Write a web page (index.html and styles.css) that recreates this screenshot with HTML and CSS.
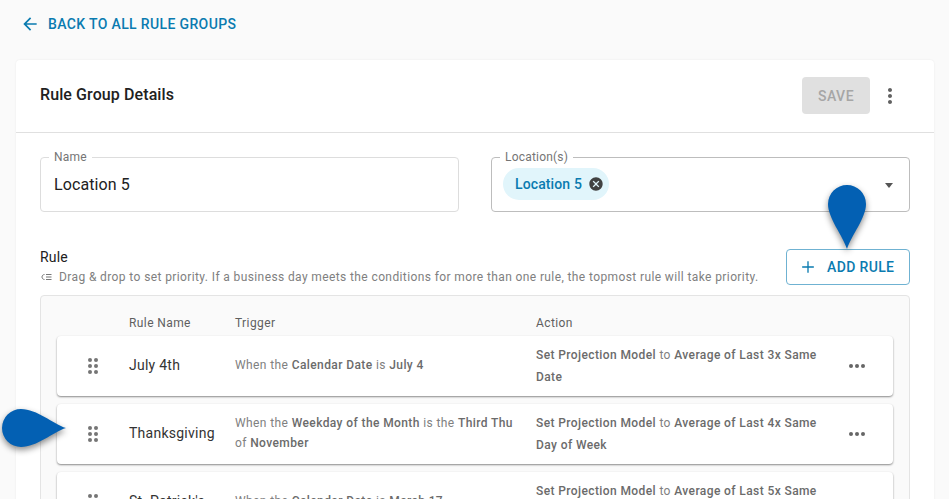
FILE: index.html
```html
<!DOCTYPE html>
<html lang="en">
<head>
<meta charset="utf-8">
<title>Rule Group Details</title>
<link rel="stylesheet" href="styles.css">
</head>
<body>
<div class="page">
  <a class="back">
    <svg class="back-icon" viewBox="0 0 24 24" width="20" height="20"><path d="M20 11H7.830l5.590-5.590L12 4l-8 8 8 8 1.410-1.410L7.830 13H20v-2z"/></svg>
    <span>BACK TO ALL RULE GROUPS</span>
  </a>
  <section class="card">
    <header class="card-head">
      <h1 class="card-title">Rule Group Details</h1>
      <div class="card-actions">
        <button class="save">SAVE</button>
        <svg class="kebab" viewBox="0 0 24 24" width="24" height="24"><path d="M12 8c1.100 0 2-.9 2-2s-.9-2-2-2-2 .9-2 2 .9 2 2 2zm0 2c-1.100 0-2 .9-2 2s.9 2 2 2 2-.9 2-2-.9-2-2-2zm0 6c-1.100 0-2 .9-2 2s.9 2 2 2 2-.9 2-2-.9-2-2-2z"/></svg>
      </div>
    </header>
    <div class="card-body">
      <div class="fields">
        <fieldset class="field">
          <legend>Name</legend>
          <div class="value">Location 5</div>
        </fieldset>
        <fieldset class="field field-select">
          <legend>Location(s)</legend>
          <span class="chip">Location 5
            <svg class="chip-x" viewBox="0 0 24 24" width="16" height="16"><path d="M12 2C6.470 2 2 6.470 2 12s4.470 10 10 10 10-4.470 10-10S17.530 2 12 2zm5 13.590L15.590 17 12 13.410 8.410 17 7 15.590 10.590 12 7 8.410 8.410 7 12 10.590 15.590 7 17 8.410 13.410 12 17 15.590z"/></svg>
          </span>
          <span class="caret"></span>
        </fieldset>
      </div>
      <div class="rule-head">
        <div class="rule-intro">
          <div class="rule-label">Rule</div>
          <div class="rule-hint">
            <svg class="hint-icon" viewBox="0 0 12 12" width="12" height="12"><path d="M4.500 3.500C3 3.500 2 4.700 2 6s1 2.500 2.500 2.500M6 3.500h5.500M6 6h5.500M6 8.500h5.500" fill="none" stroke="#777" stroke-width="1"/></svg>
            <span>Drag &amp; drop to set priority. If a business day meets the conditions for more than one rule, the topmost rule will take priority.</span>
          </div>
        </div>
        <button class="add">
          <svg viewBox="0 0 24 24" width="20" height="20"><path d="M19 12.800h-6.200V19h-1.600v-6.200H5v-1.600h6.200V5h1.600v6.200H19v1.600z"/></svg>
          <span>ADD RULE</span>
        </button>
      </div>
      <div class="table">
        <div class="table-head">
          <span class="col-name">Rule Name</span>
          <span class="col-trigger">Trigger</span>
          <span class="col-action">Action</span>
        </div>
        <div class="row">
          <div class="grip"><i></i><i></i><i></i><i></i><i></i><i></i></div>
          <div class="row-name">July 4th</div>
          <div class="row-trigger">When the <b>Calendar Date</b> is <b>July 4</b></div>
          <div class="row-action"><b>Set Projection Model</b> to <b>Average of Last 3x Same Date</b></div>
          <div class="more"><i></i><i></i><i></i></div>
        </div>
        <div class="row">
          <div class="grip"><i></i><i></i><i></i><i></i><i></i><i></i></div>
          <div class="row-name">Thanksgiving</div>
          <div class="row-trigger">When the <b>Weekday of the Month</b> is the <b>Third Thu</b> of <b>November</b></div>
          <div class="row-action"><b>Set Projection Model</b> to <b>Average of Last 4x Same Day of Week</b></div>
          <div class="more"><i></i><i></i><i></i></div>
        </div>
        <div class="row">
          <div class="grip"><i></i><i></i><i></i><i></i><i></i><i></i></div>
          <div class="row-name">St. Patrick's</div>
          <div class="row-trigger">When the <b>Calendar Date</b> is <b>March 17</b></div>
          <div class="row-action"><b>Set Projection Model</b> to <b>Average of Last 5x Same Date</b></div>
          <div class="more"><i></i><i></i><i></i></div>
        </div>
      </div>
    </div>
  </section>
  <svg class="pin pin-top" viewBox="0 0 40 66" width="40" height="66"><path d="M20 65C16 52 1 34 1 20A19 19 0 0 1 39 20C39 34 24 52 20 65Z"/></svg>
  <svg class="pin pin-left" viewBox="0 0 66 40" width="66" height="40"><path d="M65 20C52 24 36 39 20 39A19 19 0 0 1 20 1C36 1 52 16 65 20Z"/></svg>
</div>
</body>
</html>
```
FILE: styles.css
```css
* { box-sizing: border-box; }
html, body { margin: 0; height: 499px; overflow: hidden; }
body { background: #fafafa; font-family: Roboto, "Liberation Sans", sans-serif; color: #212121; }
.page { position: relative; height: 499px; overflow: hidden; padding: 0 15px 0 16px; }

.back { display: flex; align-items: center; gap: 8px; height: 60px; padding: 0 0 12px 4px; color: #0a7bb0; font-size: 14px; font-weight: 500; letter-spacing: 0.36px; }
.back-icon { fill: #0a7bb0; }

.card { background: #fff; border-radius: 4px; box-shadow: 0 0 2px rgba(0,0,0,.08); height: 600px; }
.card-head { display: flex; align-items: center; justify-content: space-between; height: 73px; padding: 0 32px 1px 24px; border-bottom: 1px solid #e0e0e0; }
.card-title { margin: 0 0 2px; font-size: 16px; font-weight: 500; letter-spacing: 0.1px; color: #212121; }
.card-actions { display: flex; align-items: center; gap: 8px; }
.save { width: 68px; height: 37px; border: 0; border-radius: 4px; background: #e0e0e0; color: #a6a6a6; font: 500 14px Roboto, sans-serif; letter-spacing: 0.5px; }
.kebab { fill: #616161; }

.card-body { padding: 18px 24px 0; }
.fields { display: grid; grid-template-columns: 1fr 1fr; gap: 32px; }
.field { position: relative; margin: 0; height: 61px; padding: 0 13px; border: 1px solid #ddd; border-radius: 4px; display: flex; align-items: center; min-width: 0; }
.field legend { padding: 0 5px; margin-left: -5px; font-size: 12px; line-height: 12px; letter-spacing: 0.2px; color: #757575; }
.value { font-size: 16px; letter-spacing: 0.1px; color: #212121; padding-bottom: 5px; }
.field-select { border-color: #bdbdbd; }
.chip { display: inline-flex; align-items: center; gap: 6px; height: 32px; margin: 0 0 7px -2px; padding: 0 5px 0 12px; border-radius: 16px; background: #e1f5fb; color: #0a7bb0; font-size: 14px; font-weight: 500; letter-spacing: 0.12px; }
.chip-x { fill: #424242; }
.caret { position: absolute; right: 16px; top: 20px; width: 0; height: 0; border: 4.500px solid transparent; border-top: 5px solid #555; border-bottom: 0; }

.rule-head { display: flex; justify-content: space-between; align-items: flex-end; margin-top: 37px; height: 36px; }
.rule-label { font-size: 14px; line-height: 16px; letter-spacing: 0.2px; color: #212121; }
.rule-hint { display: flex; align-items: center; gap: 7px; margin-top: 5px; font-size: 12px; line-height: 14px; letter-spacing: 0.39px; color: #808080; margin-bottom: 1px; }
.add { display: flex; align-items: center; gap: 9px; width: 124px; height: 36px; background: #fff; border: 1px solid #6fb2d2; border-radius: 4px; color: #0a7bb0; font: 500 14px Roboto, sans-serif; letter-spacing: 0.36px; padding: 0 0 0 11px; }
.add svg { fill: #0a7bb0; }

.table { margin-top: 10px; background: #fafafa; border: 1px solid #e4e4e4; border-radius: 4px; padding: 0 16px; height: 300px; }
.table-head { position: relative; display: grid; grid-template-columns: 72px 106px 301px 1fr; height: 40px; align-items: center; font-size: 12px; letter-spacing: 0.4px; color: #5f5f5f; padding-top: 14px; }
.col-name { grid-column: 2; }
.row { display: grid; grid-template-columns: 72px 106px 301px 300px 1fr; align-items: center; height: 60px; margin-bottom: 8px; background: #fff; border-radius: 4px; box-shadow: 0 1px 2px rgba(0,0,0,.45); font-size: 12px; line-height: 22px; letter-spacing: 0.4px; color: #808080; }
.row b { font-weight: 500; color: #6b6b6b; }
.row-name { font-size: 14px; letter-spacing: 0.25px; color: #333; padding-right: 16px; padding-bottom: 2px; line-height: 20px; }
.row-trigger { padding-right: 16px; padding-bottom: 2px; line-height: 20px; }
.grip { display: grid; grid-template-columns: 4px 4px; gap: 2px; justify-content: center; }
.grip i { width: 4px; height: 4px; border-radius: 50%; background: #757575; }
.more { display: flex; gap: 2px; justify-content: center; padding-right: 16px; }
.more i { width: 4px; height: 4px; border-radius: 50%; background: #666; }

.pin { position: absolute; fill: #0360b3; filter: drop-shadow(0 3px 3px rgba(0,0,0,.45)); }
.pin-top { left: 827px; top: 184px; }
.pin-left { left: 1px; top: 408px; }
```
